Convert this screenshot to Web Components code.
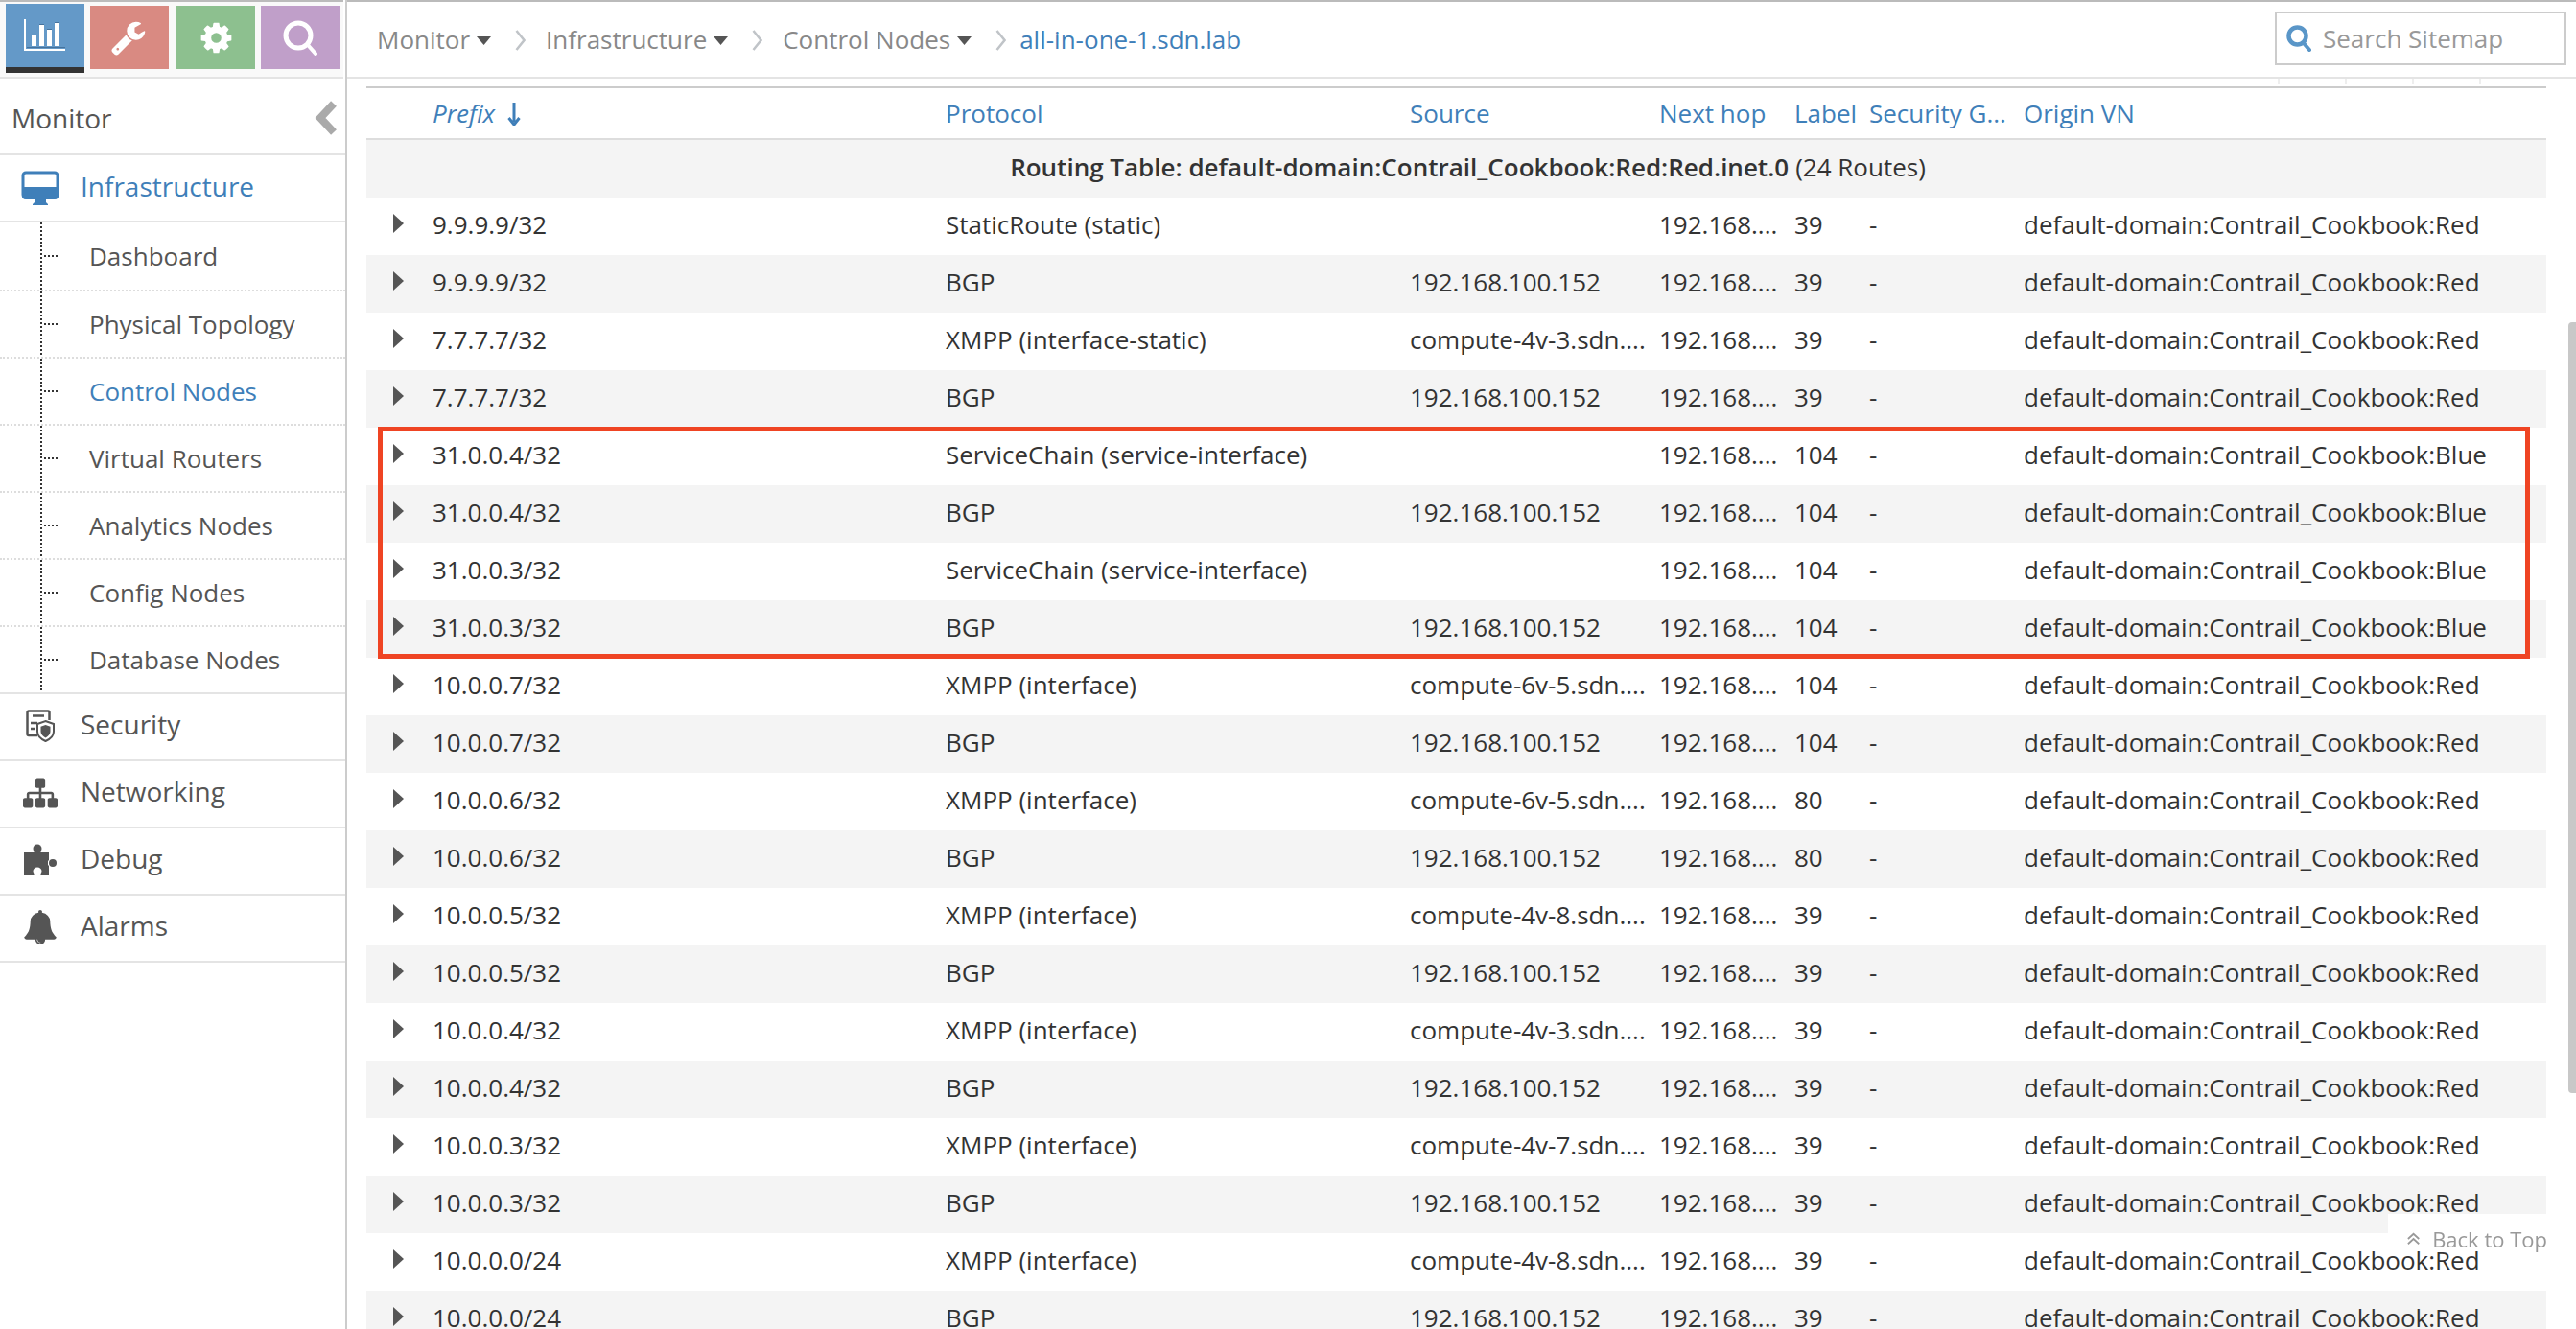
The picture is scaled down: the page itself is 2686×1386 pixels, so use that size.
<!DOCTYPE html>
<html>
<head>
<meta charset="utf-8">
<title>Monitor - Control Nodes</title>
<style>
  html, body { margin: 0; height: 100%; overflow: hidden; background: #fff; }
  body { font-family: "Open Sans", "Liberation Sans", sans-serif; font-size: 26px; color: #333; }
</style>
</head>
<body>
<contrail-app>
  <nav-tabs slot="tabs"></nav-tabs>
  <crumb-bar slot="crumbs" items="Monitor,Infrastructure,Control Nodes" current="all-in-one-1.sdn.lab"></crumb-bar>
  <search-box slot="crumbs"></search-box>
  <side-menu slot="menu">
    <menu-item label="Infrastructure" icon="monitor" active></menu-item>
    <sub-item label="Dashboard" first></sub-item>
    <sub-item label="Physical Topology"></sub-item>
    <sub-item label="Control Nodes" active></sub-item>
    <sub-item label="Virtual Routers"></sub-item>
    <sub-item label="Analytics Nodes"></sub-item>
    <sub-item label="Config Nodes"></sub-item>
    <sub-item label="Database Nodes" last></sub-item>
    <menu-item label="Security" icon="security"></menu-item>
    <menu-item label="Networking" icon="sitemap"></menu-item>
    <menu-item label="Debug" icon="puzzle"></menu-item>
    <menu-item label="Alarms" icon="bell"></menu-item>
  </side-menu>
  <route-grid slot="content"></route-grid>
</contrail-app>
<back-to-top></back-to-top>
<page-scrollbar></page-scrollbar>

<script>
const FA = {
  wrench: 'M384 1472q0-26-19-45t-45-19-45 19-19 45 19 45 45 19 45-19 19-45zm644-420l-682 682q-37 37-90 37-52 0-91-37l-106-108q-38-36-38-90 0-53 38-91l681-681q39 98 114.5 173.5t173.5 114.5zm634-435q0 39-23 106-47 134-164.5 217.5t-258.5 83.5q-185 0-316.5-131.5t-131.5-316.5 131.5-316.5 316.5-131.5q58 0 121.5 16.5t107.5 46.5q16 11 16 28t-16 28l-293 169v224l193 107q5-3 79-48.5t135.5-81 70.5-35.5q15 0 23.5 10t8.5 25z',
  cog: 'M1152 896q0-106-75-181t-181-75-181 75-75 181 75 181 181 75 181-75 75-181zm512-109v222q0 12-8 23t-20 13l-185 28q-19 54-39 91 35 50 107 138 10 12 10 25t-9 23q-27 37-99 108t-94 71q-12 0-26-9l-138-108q-44 23-91 38-16 136-29 186-7 28-36 28h-222q-14 0-24.5-8.5t-11.5-21.5l-28-184q-49-16-90-37l-141 107q-10 9-25 9-14 0-25-11-126-114-165-168-7-10-7-23 0-12 8-23 15-21 51-66.5t54-70.5q-27-50-41-99l-183-27q-13-2-21-12.5t-8-23.5v-222q0-12 8-23t19-13l186-28q14-46 39-92-40-57-107-138-10-12-10-24 0-10 9-23 26-36 98.5-107.5t94.5-71.5q13 0 26 10l138 107q44-23 91-38 16-136 29-186 7-28 36-28h222q14 0 24.5 8.5t11.5 21.5l28 184q49 16 90 37l142-107q9-9 24-9 13 0 25 10 129 119 165 170 7 8 7 22 0 12-8 23-15 21-51 66.5t-54 70.5q26 50 41 98l183 28q13 2 21 12.5t8 23.5z',
  sitemap: 'M1792 1248v320q0 40-28 68t-68 28h-320q-40 0-68-28t-28-68v-320q0-40 28-68t68-28h96v-192h-512v192h96q40 0 68 28t28 68v320q0 40-28 68t-68 28h-320q-40 0-68-28t-28-68v-320q0-40 28-68t68-28h96v-192h-512v192h96q40 0 68 28t28 68v320q0 40-28 68t-68 28h-320q-40 0-68-28t-28-68v-320q0-40 28-68t68-28h96v-192q0-52 38-90t90-38h512v-192h-96q-40 0-68-28t-28-68v-320q0-40 28-68t68-28h320q40 0 68 28t28 68v320q0 40-28 68t-68 28h-96v192h512q52 0 90 38t38 90v192h96q40 0 68 28t28 68z',
  bell: 'M912 1696q0-16-16-16-59 0-101.5-42.5t-42.5-101.5q0-16-16-16t-16 16q0 73 51.5 124.5t124.5 51.5q16 0 16-16zm816-288q0 52-38 90t-90 38h-448q0 106-75 181t-181 75-181-75-75-181h-448q-52 0-90-38t-38-90q50-42 91-88t85-119.5 74.5-158.5 50-206 19.5-260q0-152 117-282.5t307-158.5q-8-19-8-39 0-40 28-68t68-28 68 28 28 68q0 20-8 39 190 28 307 158.5t117 282.5q0 139 19.5 260t50 206 74.5 158.5 85 119.5 91 88z'
};

const MENU_ICONS = {
  monitor: `<svg width="40" height="36" viewBox="0 0 40 36"><rect x="2" y="2" width="36" height="26" rx="3" fill="none" stroke="currentColor" stroke-width="3"/><path d="M1 17h38v9a4 4 0 0 1-4 4H5a4 4 0 0 1-4-4z" fill="currentColor"/><path d="M14 30h12v3l2 2v1H12v-1l2-2z" fill="currentColor"/></svg>`,
  security: `<svg width="30" height="34" viewBox="0 0 30 34"><path d="M12 27H3a1.500 1.500 0 0 1-1.500-1.500V3A1.500 1.500 0 0 1 3 1.500h20A1.500 1.500 0 0 1 24.500 3v8" fill="none" stroke="currentColor" stroke-width="2.500"/><path d="M7 6.500h12M5 14h7M5 20h5" stroke="currentColor" stroke-width="2.500"/><path d="M20.500 12l8.500 3v8c0 4.500-4 8-8.500 10C16 31 12 27.500 12 23v-8z" fill="#fff" stroke="currentColor" stroke-width="2"/><path d="M20.500 16l5 1.800V23c0 3-2.500 5-5 6.500-2.500-1.500-5-3.500-5-6.500v-5.200z" fill="currentColor"/></svg>`,
  sitemap: `<svg width="36" height="36" viewBox="0 0 1792 1792" fill="currentColor"><path d="${FA.sitemap}"/></svg>`,
  puzzle: `<svg width="36" height="34" viewBox="0 0 36 34" fill="currentColor"><path d="M1 9h10.500V7.500h7V9H27v8.500h-1v5h1V33h-8.500c-.5-2 1-3 1-4.500a4.500 4 0 0 0-9 0c0 1.500 1.500 2.500 1 4.500H1z"/><circle cx="15" cy="5" r="4.500"/><circle cx="31" cy="20" r="4"/></svg>`,
  bell: `<svg width="36" height="38" viewBox="0 0 1792 1792" fill="currentColor"><path d="${FA.bell}"/></svg>`
};

class ContrailApp extends HTMLElement {
  constructor() {
    super();
    this.shadowDOM = this.attachShadow({mode: 'open'});
    this.shadowDOM.innerHTML = `
      <style>
        :host {
          display: grid;
          grid-template-columns: 362px 1fr;
          grid-template-rows: 82px 1fr;
          height: 1386px;
          overflow: hidden;
        }
        .side-top, .side-menu { border-right: 2px solid #ccc; }
        .crumbs {
          display: flex;
          align-items: center;
          justify-content: space-between;
          border-top: 2px solid #bbb;
          border-bottom: 2px solid #e4e4e4;
          padding: 0 10px 0 31px;
        }
        .content { overflow: hidden; min-width: 0; }
      </style>
      <div class="side-top"><slot name="tabs"></slot></div>
      <div class="crumbs"><slot name="crumbs"></slot></div>
      <div class="side-menu"><slot name="menu"></slot></div>
      <div class="content"><slot name="content"></slot></div>
    `;
  }
}

class NavTabs extends HTMLElement {
  constructor() {
    super();
    this.shadowDOM = this.attachShadow({mode: 'open'});
    this.shadowDOM.innerHTML = `
      <style>
        :host {
          display: flex;
          align-items: flex-start;
          box-sizing: border-box;
          width: 358px;
          height: 82px;
          padding: 2px 0 0 6px;
          background: #f9f9f9;
          border-top: 2px solid #bbb;
          border-bottom: 2px solid #e4e4e4;
        }
        .tab {
          display: flex;
          align-items: center;
          justify-content: center;
          width: 82px;
          height: 66px;
          margin-top: 2px;
        }
        .tab.on { margin-top: 0; border-bottom: 6px solid #333; background: #6499c8; }
        .r { background: #d98a82; margin-left: 6px; }
        .g { background: #8dc08f; margin-left: 8px; }
        .p { background: #c09fc9; margin-left: 6px; }
      </style>
      <div class="tab on">
        <svg width="44" height="34" viewBox="0 0 44 34">
          <path d="M1 0v32h42" fill="none" stroke="#fff" stroke-width="2"/>
          <path d="M8 17h5v11H8zM16 6h5v22h-5zM24 11h5v17h-5zM32 4h5v24h-5z" fill="#fff"/>
          <path d="M8 16h5v1H8zM16 5h5v1h-5zM24 10h5v1h-5zM32 3h5v1h-5zM3 30h40v-1H3z" fill="#45729c"/>
        </svg>
      </div>
      <div class="tab r">
        <svg width="38" height="38" viewBox="0 0 1792 1792" fill="#fff"><path d="${FA.wrench}"/></svg>
      </div>
      <div class="tab g">
        <svg width="37" height="37" viewBox="0 0 1792 1792" fill="#fff"><path d="${FA.cog}"/></svg>
      </div>
      <div class="tab p">
        <svg width="38" height="38" viewBox="0 0 38 38" fill="none" stroke="#fff" stroke-linecap="round">
          <circle cx="17" cy="17" r="13" stroke-width="5"/><path d="M27 27l8 9" stroke-width="4"/>
        </svg>
      </div>
    `;
  }
}

class CrumbBar extends HTMLElement {
  constructor() {
    super();
    this.shadowDOM = this.attachShadow({mode: 'open'});
  }

  connectedCallback() {
    const items = this.getAttribute('items').split(',');
    const links = items.map(name => `
      <span class="name">${name}</span>
      <svg class="caret" width="15" height="9" viewBox="0 0 15 9"><path d="M0 0h15L7.500 9z" fill="#555"/></svg>
      <svg class="sep" width="11" height="24" viewBox="0 0 11 24"><path d="M1.500 2l8 10-8 10" fill="none" stroke="#c0c4c8" stroke-width="2.500"/></svg>
    `).join('');
    this.shadowDOM.innerHTML = `
      <style>
        :host { display: flex; align-items: center; font-size: 26px; line-height: 30px; color: #888; }
        .caret { margin: 3px 0 0 7px; }
        .sep { margin: 2px 21px 0 25px; }
        .sep:nth-last-of-type(1) { margin-right: 14px; }
        .current { color: #3f7fb9; }
      </style>
      ${links}
      <span class="current">${this.getAttribute('current')}</span>
    `;
  }
}

class SearchBox extends HTMLElement {
  constructor() {
    super();
    this.shadowDOM = this.attachShadow({mode: 'open'});
    this.shadowDOM.innerHTML = `
      <style>
        :host {
          display: flex;
          align-items: center;
          box-sizing: border-box;
          width: 304px;
          height: 56px;
          margin-top: -2px;
          padding-left: 10px;
          border: 2px solid #ccc;
          font-size: 26px;
          color: #999;
        }
        svg { margin-right: 12px; }
      </style>
      <svg width="26" height="28" viewBox="0 0 26 28" fill="none" stroke="#5a96c8" stroke-linecap="round">
        <circle cx="11.500" cy="11.500" r="9" stroke-width="4.500"/><path d="M18 19l6 7" stroke-width="4"/>
      </svg>
      <span>Search Sitemap</span>
    `;
  }
}

class SideMenu extends HTMLElement {
  constructor() {
    super();
    this.shadowDOM = this.attachShadow({mode: 'open'});
    this.shadowDOM.innerHTML = `
      <style>
        :host { display: block; }
        .head {
          display: flex;
          align-items: center;
          justify-content: space-between;
          box-sizing: border-box;
          height: 80px;
          padding: 4px 8px 0 12px;
          border-bottom: 2px solid #e4e4e4;
          font-size: 28px;
          color: #555;
        }
      </style>
      <div class="head">
        <span>Monitor</span>
        <svg width="24" height="38" viewBox="0 0 24 38"><path d="M20 4L6 19l14 15" fill="none" stroke="#aaa" stroke-width="8"/></svg>
      </div>
      <slot></slot>
    `;
  }
}

class MenuItem extends HTMLElement {
  constructor() {
    super();
    this.shadowDOM = this.attachShadow({mode: 'open'});
  }

  connectedCallback() {
    this.shadowDOM.innerHTML = `
      <style>
        :host {
          display: flex;
          align-items: center;
          box-sizing: border-box;
          height: 70px;
          padding-bottom: 6px;
          border-bottom: 2px solid #e4e4e4;
          font-size: 28px;
          color: #555;
        }
        :host([active]) { color: #3f7fb9; padding-bottom: 4px; }
        .icon { display: flex; justify-content: center; width: 40px; margin: 4px 22px 0 22px; }
      </style>
      <span class="icon">${MENU_ICONS[this.getAttribute('icon')]}</span>
      <span class="label">${this.getAttribute('label')}</span>
    `;
  }
}

class SubItem extends HTMLElement {
  constructor() {
    super();
    this.shadowDOM = this.attachShadow({mode: 'open'});
  }

  connectedCallback() {
    this.shadowDOM.innerHTML = `
      <style>
        :host {
          display: flex;
          box-sizing: border-box;
          height: 70px;
          border-bottom: 2px dotted #ddd;
          font-size: 26px;
          color: #555;
        }
        :host([first]) { height: 72px; }
        :host([active]) { color: #3f7fb9; }
        :host([last]) { border-bottom: 2px solid #e4e4e4; }
        .tree {
          width: 93px;
          background:
            repeating-linear-gradient(#333 0 2px, transparent 2px 4px) 42px 0 / 2px 100% no-repeat,
            repeating-linear-gradient(90deg, #333 0 2px, transparent 2px 4px) 46px 50% / 15px 2px no-repeat;
        }
        .label { align-self: center; }
      </style>
      <span class="tree"></span>
      <span class="label">${this.getAttribute('label')}</span>
    `;
  }
}

class RouteRow extends HTMLElement {
  constructor() {
    super();
    this.shadowDOM = this.attachShadow({mode: 'open'});
  }

  set route(route) {
    this._route = route;
    this.render();
  }

  render() {
    const r = this._route;
    this.shadowDOM.innerHTML = `
      <style>
        :host {
          display: grid;
          grid-template-columns: var(--route-cols);
          align-items: center;
          box-sizing: border-box;
          height: 60px;
          padding-bottom: 4px;
          color: #333;
          white-space: nowrap;
        }
        :host([shaded]) { background: #f4f4f4; }
        svg { margin: -2px 0 0 28px; display: block; }
      </style>
      <svg width="11" height="20" viewBox="0 0 11 20"><path d="M0 0l11 10L0 20z" fill="#555"/></svg>
      <span>${r[0]}</span>
      <span>${r[1]}</span>
      <span>${r[2]}</span>
      <span>192.168....</span>
      <span>${r[3]}</span>
      <span>-</span>
      <span>default-domain:Contrail_Cookbook:${r[4]}</span>
    `;
  }
}

const NEIGHBOR = '192.168.100.152';
const ROUTES = [
  ['9.9.9.9/32', 'StaticRoute (static)', '', 39, 'Red'],
  ['9.9.9.9/32', 'BGP', NEIGHBOR, 39, 'Red'],
  ['7.7.7.7/32', 'XMPP (interface-static)', 'compute-4v-3.sdn....', 39, 'Red'],
  ['7.7.7.7/32', 'BGP', NEIGHBOR, 39, 'Red'],
  ['31.0.0.4/32', 'ServiceChain (service-interface)', '', 104, 'Blue'],
  ['31.0.0.4/32', 'BGP', NEIGHBOR, 104, 'Blue'],
  ['31.0.0.3/32', 'ServiceChain (service-interface)', '', 104, 'Blue'],
  ['31.0.0.3/32', 'BGP', NEIGHBOR, 104, 'Blue'],
  ['10.0.0.7/32', 'XMPP (interface)', 'compute-6v-5.sdn....', 104, 'Red'],
  ['10.0.0.7/32', 'BGP', NEIGHBOR, 104, 'Red'],
  ['10.0.0.6/32', 'XMPP (interface)', 'compute-6v-5.sdn....', 80, 'Red'],
  ['10.0.0.6/32', 'BGP', NEIGHBOR, 80, 'Red'],
  ['10.0.0.5/32', 'XMPP (interface)', 'compute-4v-8.sdn....', 39, 'Red'],
  ['10.0.0.5/32', 'BGP', NEIGHBOR, 39, 'Red'],
  ['10.0.0.4/32', 'XMPP (interface)', 'compute-4v-3.sdn....', 39, 'Red'],
  ['10.0.0.4/32', 'BGP', NEIGHBOR, 39, 'Red'],
  ['10.0.0.3/32', 'XMPP (interface)', 'compute-4v-7.sdn....', 39, 'Red'],
  ['10.0.0.3/32', 'BGP', NEIGHBOR, 39, 'Red'],
  ['10.0.0.0/24', 'XMPP (interface)', 'compute-4v-8.sdn....', 39, 'Red'],
  ['10.0.0.0/24', 'BGP', NEIGHBOR, 39, 'Red']
];

class RouteGrid extends HTMLElement {
  constructor() {
    super();
    this.shadowDOM = this.attachShadow({mode: 'open'});
    this.shadowDOM.innerHTML = `
      <style>
        :host {
          display: block;
          --route-cols: 69px 535px 484px 260px 141px 78px 161px 1fr;
          padding-right: 31px;
          padding-left: 20px;
        }
        .ticks { display: flex; justify-content: flex-end; height: 6px; margin: 0 0 2px; }
        .ticks i { width: 70px; border-left: 2px solid #eee; box-sizing: border-box; }
        .head {
          display: grid;
          grid-template-columns: var(--route-cols);
          align-items: center;
          height: 52px;
          border-top: 2px solid #ccc;
          border-bottom: 2px solid #ddd;
          color: #3f7fb9;
          white-space: nowrap;
        }
        .head em svg { margin-left: 13px; vertical-align: -3px; }
        .group {
          display: flex;
          align-items: center;
          justify-content: center;
          height: 60px;
          padding: 0 0 4px 24px;
          box-sizing: border-box;
          background: #f4f4f4;
          color: #333;
        }
        .group b { font-weight: 600; margin-right: 7px; }
        .hl { position: relative; }
        .hl::after {
          content: "";
          position: absolute;
          left: 12px;
          right: 17px;
          top: -1px;
          bottom: -1px;
          border: 5px solid #ef4423;
          pointer-events: none;
        }
      </style>
      <div class="ticks"><i></i><i></i><i></i><i></i></div>
      <div class="head">
        <span></span>
        <em>Prefix<svg width="14" height="24" viewBox="0 0 14 24"><path d="M7 0v20M1.500 16L7 23l5.500-7" fill="none" stroke="#3f7fb9" stroke-width="3"/></svg></em>
        <span>Protocol</span>
        <span>Source</span>
        <span>Next hop</span>
        <span>Label</span>
        <span>Security G...</span>
        <span>Origin VN</span>
      </div>
      <div class="group"><b>Routing Table: default-domain:Contrail_Cookbook:Red:Red.inet.0</b> (24 Routes)</div>
      <div class="rows"></div>
    `;
    const rows = this.shadowDOM.querySelector('.rows');
    const addRow = (parent, route, shaded) => {
      const row = document.createElement('route-row');
      if (shaded) row.setAttribute('shaded', '');
      row.route = route;
      parent.appendChild(row);
    };
    ROUTES.slice(0, 4).forEach((r, i) => addRow(rows, r, i % 2 === 1));
    const hl = document.createElement('div');
    hl.className = 'hl';
    rows.appendChild(hl);
    ROUTES.slice(4, 8).forEach((r, i) => addRow(hl, r, i % 2 === 1));
    ROUTES.slice(8).forEach((r, i) => addRow(rows, r, i % 2 === 1));
  }
}

class BackToTop extends HTMLElement {
  constructor() {
    super();
    this.shadowDOM = this.attachShadow({mode: 'open'});
    this.shadowDOM.innerHTML = `
      <style>
        :host {
          position: fixed;
          left: 2490px;
          top: 1266px;
          display: flex;
          align-items: flex-start;
          box-sizing: border-box;
          width: 166px;
          height: 36px;
          padding: 13px 0 0 20px;
          background: #fff;
          color: #999;
          font-size: 22px;
          line-height: 26px;
          white-space: nowrap;
        }
        svg { margin: 6px 13px 0 0; }
      </style>
      <svg width="15" height="14" viewBox="0 0 15 14" fill="none" stroke="#999" stroke-width="2"><path d="M1 7l6.500-6L14 7M1 13l6.500-6L14 13"/></svg>
      <span>Back to Top</span>
    `;
  }
}

class PageScrollbar extends HTMLElement {
  constructor() {
    super();
    this.shadowDOM = this.attachShadow({mode: 'open'});
    this.shadowDOM.innerHTML = `
      <style>
        :host {
          position: fixed;
          left: 2678px;
          top: 336px;
          width: 8px;
          height: 804px;
          border-radius: 4px 0 0 4px;
          background: #c8c8c8;
        }
      </style>
    `;
  }
}

customElements.define('route-row', RouteRow);
customElements.define('contrail-app', ContrailApp);
customElements.define('nav-tabs', NavTabs);
customElements.define('crumb-bar', CrumbBar);
customElements.define('search-box', SearchBox);
customElements.define('side-menu', SideMenu);
customElements.define('menu-item', MenuItem);
customElements.define('sub-item', SubItem);
customElements.define('route-grid', RouteGrid);
customElements.define('back-to-top', BackToTop);
customElements.define('page-scrollbar', PageScrollbar);
</script>
</body>
</html>
